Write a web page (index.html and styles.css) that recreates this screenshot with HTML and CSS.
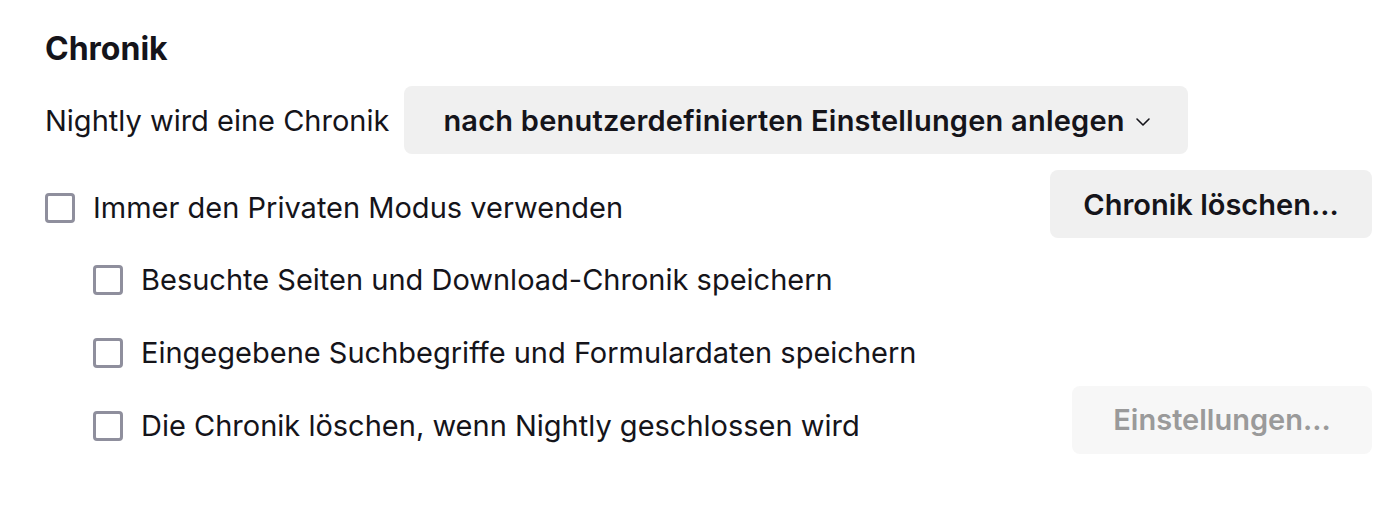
FILE: index.html
```html
<!DOCTYPE html>
<html lang="de">
<head>
<meta charset="utf-8">
<link rel="stylesheet" href="styles.css">
</head>
<body>
<section class="pane">
  <h1 class="title">Chronik</h1>
  <div class="mode-row">
    <span class="label">Nightly wird eine Chronik</span>
    <button class="menulist">nach benutzerdefinierten Einstellungen anlegen
      <svg class="chev" width="16" height="10" viewBox="0 0 16 10"><path d="M2 2 L8 8 L14 2" fill="none" stroke="#15141a" stroke-width="1.6" stroke-linecap="round" stroke-linejoin="round"/></svg>
    </button>
  </div>
  <div class="row row-main">
    <label class="check check-low"><span class="box"></span><span>Immer den Privaten Modus verwenden</span></label>
    <button class="btn btn-clear">Chronik löschen...</button>
  </div>
  <div class="sub">
    <div class="row row-sub">
      <label class="check"><span class="box"></span><span>Besuchte Seiten und Download-Chronik speichern</span></label>
    </div>
    <div class="row row-sub">
      <label class="check"><span class="box"></span><span>Eingegebene Suchbegriffe und Formulardaten speichern</span></label>
    </div>
    <div class="row row-sub">
      <label class="check"><span class="box"></span><span>Die Chronik löschen, wenn Nightly geschlossen wird</span></label>
      <button class="btn btn-disabled">Einstellungen...</button>
    </div>
  </div>
</section>
</body>
</html>
```
FILE: styles.css
```css
html, body {
  margin: 0;
  padding: 0;
  background: #ffffff;
}
body {
  font-family: Inter, "Noto Sans", sans-serif;
  color: #15141a;
  font-size: 29px;
}
.pane {
  width: 1327px;
  padding: 0 26px 0 45px;
}
.title {
  margin: 0;
  padding-top: 28px;
  font-size: 32px;
  font-weight: 700;
  line-height: 42px;
}
.mode-row {
  display: flex;
  align-items: center;
  gap: 15px;
  margin-top: 16px;
}
.menulist {
  display: flex;
  align-items: center;
  gap: 10px;
  height: 68px;
  padding: 0 37px 0 39px;
  border: none;
  border-radius: 8px;
  background: #f0f0f0;
  font: inherit;
  font-weight: 600;
  letter-spacing: 0.22px;
  color: #15141a;
}
.chev { margin-top: 4px; }
.row {
  display: flex;
  align-items: center;
  justify-content: space-between;
}
.row-main {
  margin-top: 16px;
  height: 68px;
}
.check {
  display: flex;
  align-items: center;
  gap: 18px;
}
.check-low {
  padding-top: 7px;
}
.box {
  box-sizing: border-box;
  width: 30px;
  height: 30px;
  border: 3px solid #8f8f9d;
  border-radius: 4px;
  flex: none;
}
.btn {
  height: 68px;
  border: none;
  border-radius: 8px;
  font: inherit;
  font-weight: 600;
  padding: 0 30px;
}
.btn-clear {
  background: #f0f0f0;
  color: #15141a;
  width: 322px;
}
.btn-disabled {
  background: #f7f7f7;
  color: #9a9a9a;
  width: 300px;
  margin-top: -12px;
}
.sub {
  padding-left: 48px;
}
.row-sub {
  height: 73px;
}
.sub .row-sub:first-child { margin-top: 5px; }
```
